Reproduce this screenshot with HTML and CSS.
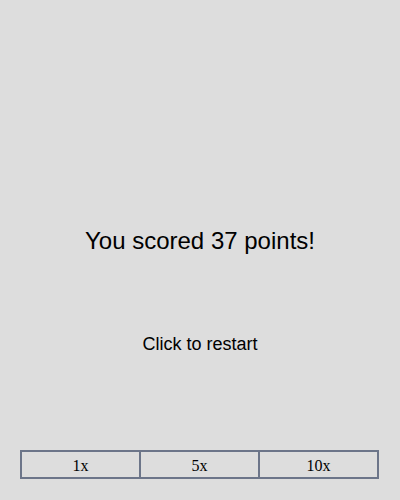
FILE: index.html
```html
<!DOCTYPE html>
<html>
<head>
<meta charset="utf-8">
<link rel="stylesheet" href="styles.css">
</head>
<body>
<div class="screen">
  <div class="score">You scored 37 points!</div>
  <div class="restart">Click to restart</div>
  <div class="speeds">
    <div class="speed">1x</div>
    <div class="speed">5x</div>
    <div class="speed">10x</div>
  </div>
</div>
</body>
</html>
```
FILE: styles.css
```css
html, body {
  margin: 0;
  padding: 0;
  background: #dddddd;
}
.screen {
  width: 400px;
  height: 500px;
  padding-top: 227px;
  box-sizing: border-box;
  font-family: "Liberation Sans", Arial, sans-serif;
  color: #000;
}
.score {
  font-size: 24px;
  line-height: 28px;
  text-align: center;
}
.restart {
  margin-top: 79px;
  font-size: 18px;
  line-height: 20px;
  text-align: center;
}
.speeds {
  margin: 96px 0 0 20px;
  width: 359px;
  height: 29px;
  box-sizing: border-box;
  border: 2px solid #6c7589;
  display: flex;
}
.speed {
  flex: 1;
  padding-top: 2px;
  line-height: 23px;
  text-align: center;
  font-family: "Liberation Serif", "Times New Roman", serif;
  font-size: 16px;
}
.speed + .speed {
  border-left: 2px solid #6c7589;
}
```
